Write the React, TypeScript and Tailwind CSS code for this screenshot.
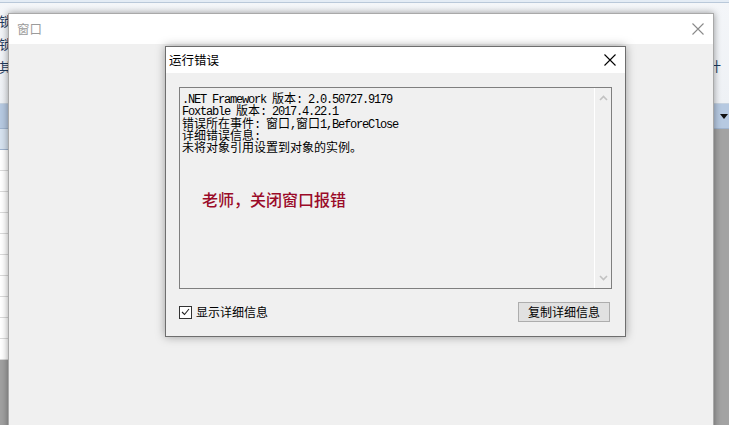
const cjk = "font-['Noto_Sans_CJK_SC',sans-serif]";

function MonoLine({ text }: { text: string }) {
  // ascii runs narrowed to half-width like SimSun, CJK left as is
  const parts = text.split(/([\x00-\x7f]+)/).filter(Boolean);
  return (
    <div className="h-[12.25px] leading-[12.25px] whitespace-pre">
      {parts.map((p, i) =>
        /^[\x00-\x7f]+$/.test(p) ? (
          <span key={i} className="font-['Liberation_Mono',monospace] text-[12px] leading-[12px] tracking-[-1.2px]">
            {p}
          </span>
        ) : (
          <span key={i} className={`${cjk} text-[12px] leading-[12px]`}>
            {p}
          </span>
        )
      )}
    </div>
  );
}

function CloseX({ className }: { className: string }) {
  return (
    <svg width="12" height="12" viewBox="0 0 12 12" className={className}>
      <path d="M0.5 0.5 L11.5 11.5 M11.5 0.5 L0.5 11.5" stroke="currentColor" strokeWidth="1.1" fill="none" />
    </svg>
  );
}

function BackgroundApp() {
  const rows = Array.from({ length: 10 });
  return (
    <div className="flex flex-col w-full h-full bg-[#f0f0f0]">
      <div className="h-[3px] bg-[#e4ecf5] border-b border-[#b9c8d9] shrink-0" />
      <div className="h-[101px] shrink-0 flex justify-between bg-gradient-to-b from-[#f4f6f9] to-[#eef1f5] border-b border-[#c7d3e0]">
        <div className={`flex flex-col gap-[9px] pt-[11px] -ml-px text-[13px] leading-[14px] text-[#1e395b] ${cjk}`}>
          <span>锁定</span>
          <span>锁定</span>
          <span>其他</span>
        </div>
        <div className={`flex items-end pb-[28px] pr-[8px] text-[13px] text-[#1e395b] ${cjk}`}>统计</div>
      </div>
      <div className="flex flex-1">
        <div className="w-[300px] flex flex-col">
          <div className="h-[25px] bg-[#b6c9e1] border-b border-[#9fb4cf]" />
          <div className="h-[21px] bg-[#d6e2ef] border-b border-[#9fb4cf]" />
          {rows.map((_, i) => (
            <div key={i} className="h-[21px] bg-white border-b border-[#dadada]" />
          ))}
          <div className="flex-1 bg-[#a0a0a0]" />
        </div>
        <div className="flex-1 flex flex-col">
          <div className="h-[25px] bg-[#b6c9e1] border-b border-[#9fb4cf] flex items-center justify-end pr-[1px]">
            <svg width="8" height="5" viewBox="0 0 8 5">
              <path d="M0 0 L8 0 L4 5 Z" fill="#111" />
            </svg>
          </div>
          <div className="flex-1 bg-[#a3a3a3]" />
        </div>
      </div>
    </div>
  );
}

function ErrorDialog() {
  const lines = [
    ".NET Framework 版本: 2.0.50727.9179",
    "Foxtable 版本: 2017.4.22.1",
    "错误所在事件: 窗口,窗口1,BeforeClose",
    "详细错误信息:",
    "未将对象引用设置到对象的实例。",
  ];
  return (
    <div className="absolute left-[156px] top-[2px] w-[461px] h-[291px] bg-[#f0f0f0] border border-[#6e6e6e] shadow-[0_0_9px_rgba(0,0,0,0.35)] flex flex-col">
      <div className="h-[26px] bg-white flex items-center justify-between pl-[3px] pr-[9px] shrink-0">
        <span className={`${cjk} text-[12.5px] text-black`}>运行错误</span>
        <CloseX className="text-black" />
      </div>
      <div className="flex flex-col pl-[13px] pt-[14px]">
        <div className="w-[433px] h-[202px] border border-[#7f7f7f] flex">
          <div className="flex-1 flex flex-col pl-[2px] pt-[3px] text-black">
            {lines.map((l) => (
              <MonoLine key={l} text={l} />
            ))}
            <div className={`mt-[38px] pl-[20px] ${cjk} text-[16px] leading-[18px] font-medium text-[#9a0a28]`}>
              老师，关闭窗口报错
            </div>
          </div>
          <div className="w-[17px] border-l border-white flex flex-col justify-between items-center py-[7px]">
            <svg width="9" height="6" viewBox="0 0 9 6">
              <path d="M1 5 L4.5 1.5 L8 5" stroke="#c2c2c2" strokeWidth="1.6" fill="none" />
            </svg>
            <svg width="9" height="6" viewBox="0 0 9 6">
              <path d="M1 1 L4.5 4.5 L8 1" stroke="#c2c2c2" strokeWidth="1.6" fill="none" />
            </svg>
          </div>
        </div>
        <div className="w-[431px] flex items-center justify-between mt-[13px]">
          <label className="flex items-center gap-[4px]">
            <span className="w-[13px] h-[13px] border border-[#333] bg-white flex items-center justify-center">
              <svg width="9" height="8" viewBox="0 0 9 8">
                <path d="M1 4 L3.5 6.5 L8 1" stroke="#222" strokeWidth="1.1" fill="none" />
              </svg>
            </span>
            <span className={`${cjk} text-[12px] leading-[14px] text-black`}>显示详细信息</span>
          </label>
          <button className={`w-[92px] h-[20px] border border-[#adadad] bg-[#e1e1e1] ${cjk} text-[12px] leading-[14px] text-black`}>
            复制详细信息
          </button>
        </div>
      </div>
    </div>
  );
}

export default function App() {
  return (
    <div className="relative w-[729px] h-[425px] overflow-hidden">
      <BackgroundApp />
      <div className="absolute left-[8px] top-[13px] w-[706px] h-[430px] bg-[#f0f0f0] border border-[#a9a9a9] shadow-[0_0_7px_rgba(0,0,0,0.4)] flex flex-col">
        <div className="h-[30px] bg-white flex items-center justify-between pl-[8px] pr-[9px] shrink-0">
          <span className={`${cjk} text-[12.5px] text-[#9b9b9b]`}>窗口</span>
          <CloseX className="text-[#8a8a8a]" />
        </div>
        <div className="relative flex-1">
          <ErrorDialog />
        </div>
      </div>
    </div>
  );
}
